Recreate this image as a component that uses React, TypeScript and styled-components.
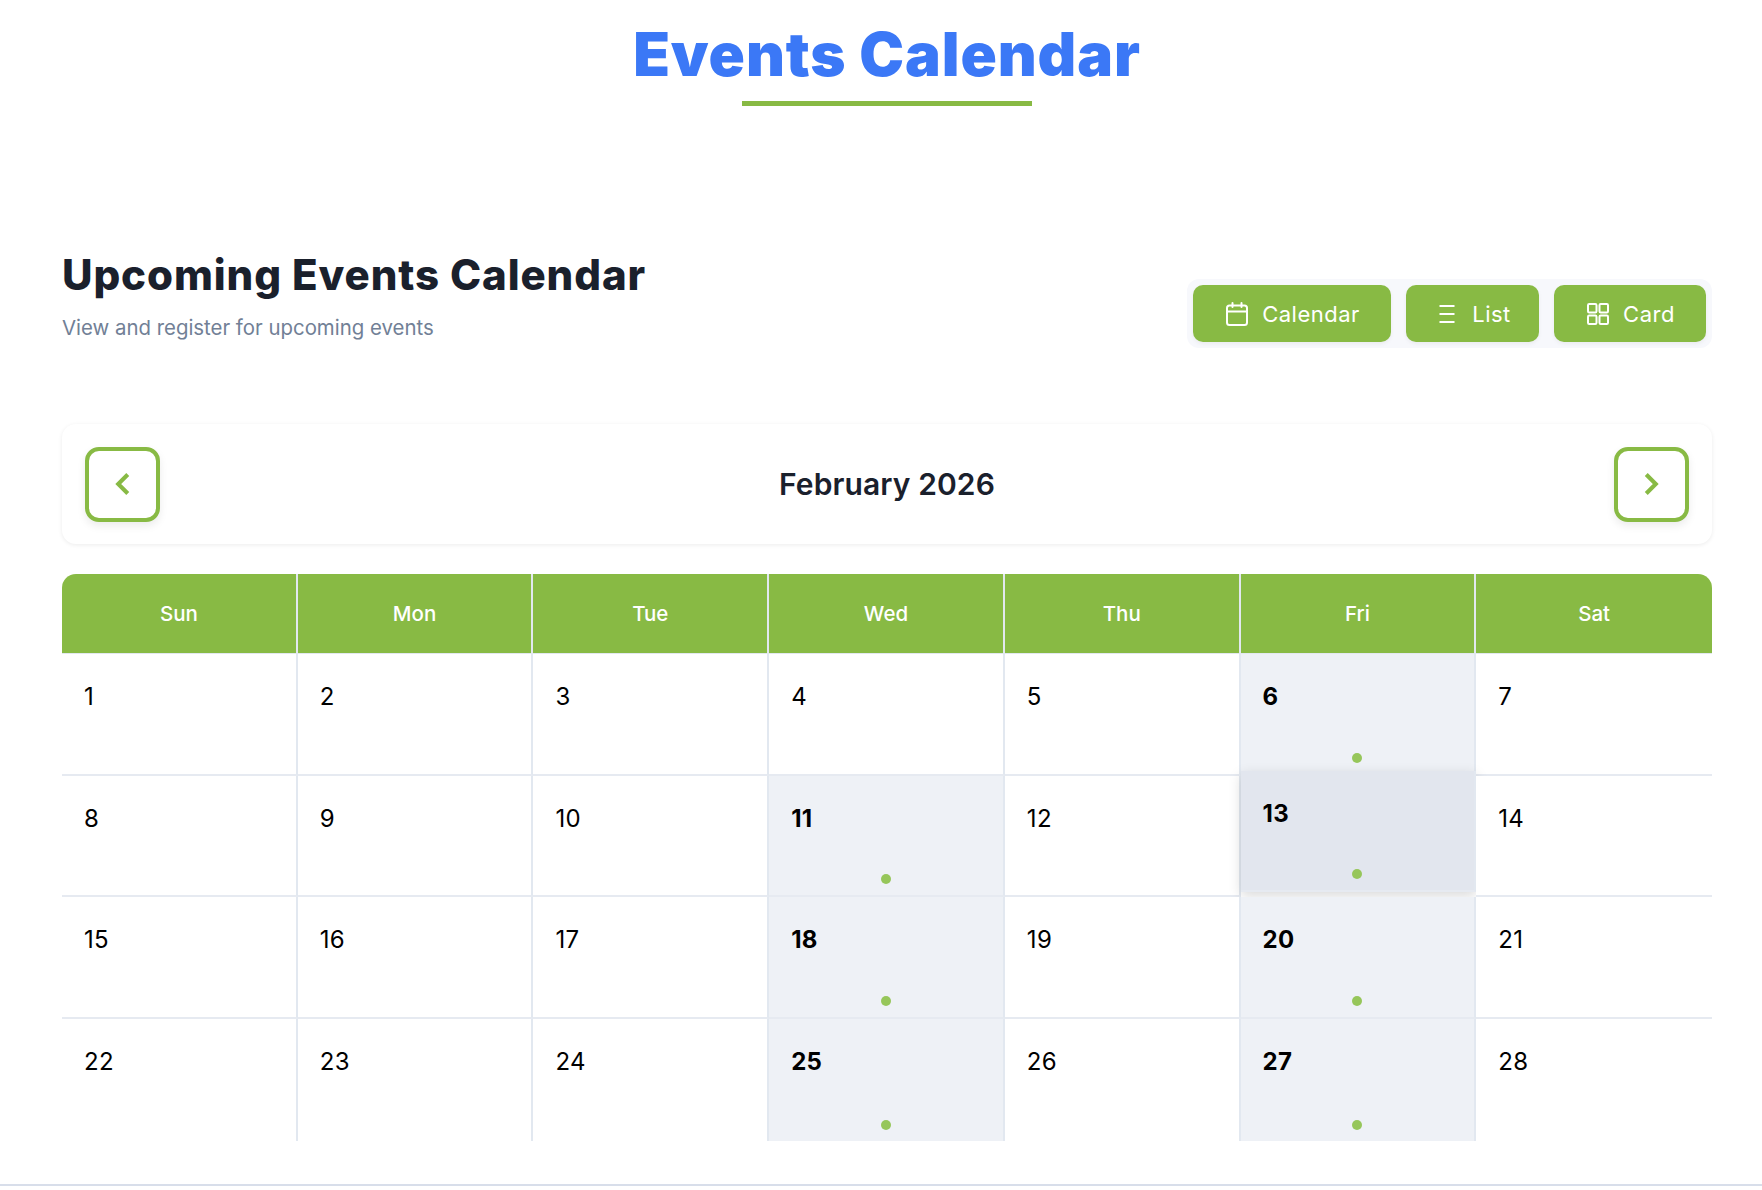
import { createGlobalStyle, styled } from "styled-components";
import { ChevronLeft, ChevronRight } from "lucide-react";

const GlobalStyle = createGlobalStyle`
  * { box-sizing: border-box; }
  html, body { margin: 0; padding: 0; background: #fff; }
  body { font-family: "Inter", "Liberation Sans", sans-serif; color: #000; }
`;

const DAY_NAMES = ["Sun", "Mon", "Tue", "Wed", "Thu", "Fri", "Sat"];
const EVENT_DAYS = [6, 11, 13, 18, 20, 25, 27];
const HOVER_DAY = 13;
const DAYS = Array.from({ length: 28 }, (_, i) => i + 1);

function CalendarGlyph() {
  return (
    <svg width="26" height="26" viewBox="0 0 26 26" fill="none" stroke="currentColor" strokeWidth="2" strokeLinecap="round" strokeLinejoin="round">
      <rect x="3" y="4.5" width="20" height="19.5" rx="2.5" />
      <path d="M3 10.5h20M8.5 2v4M17.5 2v4" />
    </svg>
  );
}

function ListGlyph() {
  return (
    <svg width="26" height="26" viewBox="0 0 26 26" fill="none" stroke="currentColor" strokeWidth="2">
      <path d="M5.5 5h15M5.5 13h15M5.5 21h15" />
    </svg>
  );
}

function CardGlyph() {
  return (
    <svg width="26" height="26" viewBox="0 0 26 26" fill="none" stroke="currentColor" strokeWidth="2" strokeLinejoin="round">
      <rect x="3" y="3" width="8.5" height="8.5" rx="1.2" />
      <rect x="14.5" y="3" width="8.5" height="8.5" rx="1.2" />
      <rect x="3" y="14.5" width="8.5" height="8.5" rx="1.2" />
      <rect x="14.5" y="14.5" width="8.5" height="8.5" rx="1.2" />
    </svg>
  );
}

export default function App() {
  return (
    <>
      <GlobalStyle />
      <GlobalStyle />
      <Page>
        <Content>
          <PageTitle>Events Calendar</PageTitle>
          <TitleRule />
          <TopRow>
            <div>
              <Heading>Upcoming Events Calendar</Heading>
              <Sub>View and register for upcoming events</Sub>
            </div>
            <Toggle>
              <ToggleButton $w={198}>
                <CalendarGlyph />
                Calendar
              </ToggleButton>
              <ToggleButton $w={133}>
                <ListGlyph />
                List
              </ToggleButton>
              <ToggleButton $w={152}>
                <CardGlyph />
                Card
              </ToggleButton>
            </Toggle>
          </TopRow>
          <MonthBar>
            <NavButton>
              <ChevronLeft size={38} strokeWidth={2.6} strokeLinecap="butt" strokeLinejoin="miter" />
            </NavButton>
            <MonthName>February 2026</MonthName>
            <NavButton>
              <ChevronRight size={38} strokeWidth={2.6} strokeLinecap="butt" strokeLinejoin="miter" />
            </NavButton>
          </MonthBar>
          <Calendar>
            <HeadRow>
              {DAY_NAMES.map((d) => (
                <HeadCell key={d}>{d}</HeadCell>
              ))}
            </HeadRow>
            <Body>
              {DAYS.map((day) => {
                const hasEvent = EVENT_DAYS.includes(day);
                return (
                  <DayCell key={day} $event={hasEvent} $hover={day === HOVER_DAY}>
                    <DayNumber $event={hasEvent}>{day}</DayNumber>
                    {hasEvent && <EventDot />}
                  </DayCell>
                );
              })}
            </Body>
          </Calendar>
        </Content>
        <Footer />
      </Page>
    </>
  );
}

const Page = styled.div`
  height: 1190px;
  overflow: hidden;
  display: flex;
  flex-direction: column;
`;

const Content = styled.div`
  flex: 1;
  padding: 0 50px 0 62px;
`;

const PageTitle = styled.h1`
  margin: 0;
  padding-top: 19px;
  height: 84px;
  text-align: center;
  font-size: 60px;
  line-height: 70px;
  font-weight: 900;
  letter-spacing: 0.9px;
  color: #3b78f6;
`;

const TitleRule = styled.div`
  width: 290px;
  height: 5px;
  margin: 17px auto 0;
  background: #88ba44;
`;

const TopRow = styled.div`
  display: flex;
  justify-content: space-between;
  align-items: flex-end;
  margin-top: 141px;
`;

const Heading = styled.h2`
  margin: 0;
  font-size: 42px;
  line-height: 56px;
  font-weight: 800;
  letter-spacing: 0.9px;
  color: #1a202c;
`;

const Sub = styled.p`
  margin: 10px 0 0;
  font-size: 20.4px;
  line-height: 30px;
  color: #718096;
`;

const Toggle = styled.div`
  display: flex;
  gap: 15px;
  padding: 6px;
  margin-bottom: -5px;
  border-radius: 12px;
  background: #f7f8fc;
`;

const ToggleButton = styled.button<{ $w: number }>`
  display: flex;
  align-items: center;
  justify-content: center;
  gap: 12px;
  width: ${(p) => p.$w}px;
  height: 57px;
  padding: 0;
  border: 0;
  border-radius: 10px;
  background: #88ba44;
  color: #fff;
  font-family: inherit;
  font-size: 22px;
  letter-spacing: 0.5px;
  box-shadow: 0 2px 4px rgba(0, 0, 0, 0.05);
`;

const MonthBar = styled.div`
  display: flex;
  align-items: center;
  justify-content: space-between;
  height: 120px;
  margin-top: 81px;
  padding: 0 23px;
  border-radius: 14px;
  background: #fff;
  box-shadow: 0 1px 4px rgba(0, 0, 0, 0.08);
`;

const MonthName = styled.div`
  font-size: 30px;
  font-weight: 600;
  letter-spacing: 0.1px;
  color: #1a202c;
`;

const NavButton = styled.button`
  display: flex;
  align-items: center;
  justify-content: center;
  width: 75px;
  height: 75px;
  padding: 0;
  border: 4px solid #88ba44;
  border-radius: 14px;
  background: #fff;
  color: #88ba44;
  box-shadow: 0 4px 8px rgba(0, 0, 0, 0.08);
`;

const Calendar = styled.div`
  margin-top: 30px;
  border-radius: 14px;
  background: #fff;
`;

const HeadRow = styled.div`
  display: grid;
  grid-template-columns: repeat(7, 1fr);
  height: 80px;
  border-radius: 14px 14px 0 0;
  overflow: hidden;
  background: #88ba44;
  border-bottom: 1px solid #e2e8f0;
`;

const HeadCell = styled.div`
  display: flex;
  align-items: center;
  justify-content: center;
  color: #fff;
  font-size: 20.5px;
  font-weight: 500;
  border-right: 2px solid #e2e8f0;
  &:last-child {
    border-right: 0;
  }
`;

const Body = styled.div`
  display: grid;
  grid-template-columns: repeat(7, 1fr);
  grid-auto-rows: 121.7px;
`;

const DayCell = styled.div<{ $event: boolean; $hover: boolean }>`
  position: relative;
  padding: 29px 22px;
  border-right: 2px solid #e2e8f0;
  border-bottom: 2px solid #e6eaf1;
  background: ${(p) => (p.$hover ? "#e2e6ee" : p.$event ? "#eef1f6" : "#fff")};
  ${(p) =>
    p.$hover &&
    `
    transform: translateY(-5px);
    box-shadow: 0 4px 12px rgba(0, 0, 0, 0.15);
  `}
  &:nth-child(7n) {
    border-right: 0;
  }
  &:nth-child(n + 22) {
    border-bottom: 0;
  }
`;

const DayNumber = styled.div<{ $event: boolean }>`
  font-size: 24px;
  line-height: 28px;
  letter-spacing: 0.3px;
  font-weight: ${(p) => (p.$event ? 700 : 400)};
`;

const EventDot = styled.span`
  position: absolute;
  left: 50%;
  bottom: 11px;
  width: 10px;
  height: 10px;
  margin-left: -5px;
  border-radius: 50%;
  background: #96c65a;
`;

const Footer = styled.div`
  height: 6px;
  border-top: 2px solid #d8deea;
`;
